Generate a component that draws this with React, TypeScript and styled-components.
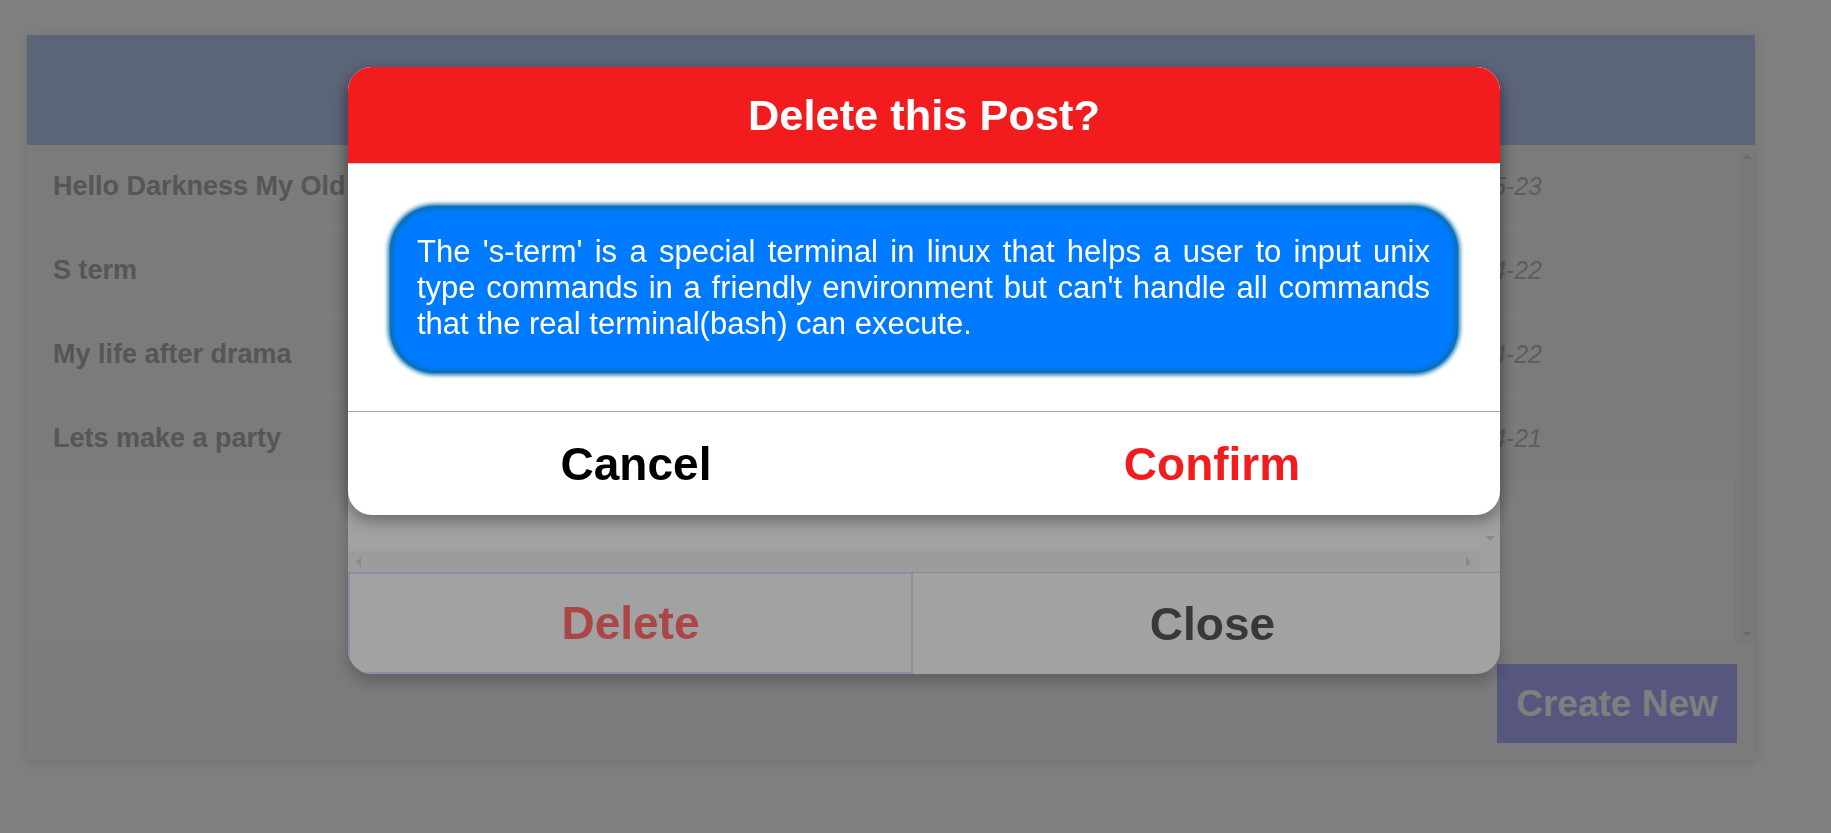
import React from "react";
import styled, { createGlobalStyle, css } from "styled-components";

const GlobalStyle = createGlobalStyle`
  html, body {
    margin: 0;
    padding: 0;
    background: #ffffff;
    font-family: "Liberation Sans", Arial, Helvetica, sans-serif;
  }
  body {
    width: 1831px;
    height: 833px;
    overflow: hidden;
  }
  * { box-sizing: border-box; }
`;

/* ---------- page behind the dialogs ---------- */

const Page = styled.main`
  height: 833px;
  padding: 35px 0 0 27px;
`;

const Card = styled.section`
  width: 1728px;
  height: 725px;
  background: #f6f6f6;
  box-shadow: 0 2px 12px rgba(0, 0, 0, 0.12);
  display: flex;
  flex-direction: column;
`;

const CardHeader = styled.header`
  flex: none;
  height: 110px;
  background: #b8c8f0;
`;

const ListArea = styled.div`
  flex: none;
  height: 500px;
  display: flex;
`;

const ListContent = styled.div`
  flex: 1;
  display: flex;
  flex-direction: column;
`;

const PostRow = styled.div`
  flex: none;
  height: 84px;
  border-bottom: 1px solid #fdfdfd;
  display: flex;
  align-items: center;
  justify-content: space-between;
  padding: 0 196px 0 26px;
`;

const PostTitle = styled.span`
  font-size: 27px;
  font-weight: 700;
  color: #acacac;
  white-space: nowrap;
`;

const PostDate = styled.span`
  font-size: 25px;
  font-style: italic;
  color: #bcbcbc;
`;

const EmptyPanel = styled.div`
  flex: 1;
  margin-right: 3px;
  background: #fafafa;
  border-right: 1px solid #ececec;
`;

const VScroll = styled.div<{ $bg: string; $w: number }>`
  flex: none;
  width: ${(p) => p.$w}px;
  background: ${(p) => p.$bg};
  display: flex;
  flex-direction: column;
  align-items: center;
  justify-content: space-between;
  padding: 9px 0 8px;
`;

const Arrow = styled.span<{ $dir: "up" | "down" | "left" | "right"; $color: string }>`
  display: block;
  width: 0;
  height: 0;
  ${(p) =>
    p.$dir === "up"
      ? css`
          border-left: 5px solid transparent;
          border-right: 5px solid transparent;
          border-bottom: 5px solid ${p.$color};
        `
      : p.$dir === "down"
      ? css`
          border-left: 5px solid transparent;
          border-right: 5px solid transparent;
          border-top: 5px solid ${p.$color};
        `
      : p.$dir === "left"
      ? css`
          border-top: 5px solid transparent;
          border-bottom: 5px solid transparent;
          border-right: 5px solid ${p.$color};
        `
      : css`
          border-top: 5px solid transparent;
          border-bottom: 5px solid transparent;
          border-left: 5px solid ${p.$color};
        `}
`;

const Spacer = styled.span`
  display: block;
`;

const CardFooter = styled.footer`
  flex: 1;
  display: flex;
  justify-content: flex-end;
  align-items: flex-start;
  padding: 18px 18px 0 0;
  border-top: 1px solid #fcfcfc;
`;

const CreateButton = styled.button`
  width: 240px;
  height: 79px;
  border: none;
  background: #aeacfe;
  color: #ffffff;
  font-family: inherit;
  font-size: 37px;
  font-weight: 700;
  padding: 0;
`;

/* ---------- overlay & dialogs ---------- */

const Overlay = styled.div`
  position: fixed;
  inset: 0;
  background: rgba(0, 0, 0, 0.5);
`;

const BackModal = styled.div`
  position: fixed;
  left: 348px;
  top: 67px;
  width: 1152px;
  height: 607px;
  background: #a2a2a2;
  border-radius: 24px;
  overflow: hidden;
  display: flex;
  flex-direction: column;
  box-shadow: 0 8px 16px rgba(0, 0, 0, 0.22);
`;

const BackBody = styled.div`
  flex: 1;
  display: flex;
`;

const BackText = styled.div`
  flex: 1;
`;

const BackVScroll = styled.div`
  flex: none;
  width: 21px;
  background: #a0a0a0;
  display: flex;
  flex-direction: column;
  justify-content: flex-end;
  align-items: center;
  padding-bottom: 10px;
`;

const HScroll = styled.div`
  flex: none;
  height: 21px;
  display: flex;
`;

const HTrack = styled.div`
  flex: 1;
  background: #9c9c9c;
  display: flex;
  align-items: center;
  justify-content: space-between;
  padding: 0 8px 0 8px;
`;

const ScrollCorner = styled.div`
  flex: none;
  width: 21px;
  background: #a0a0a0;
`;

const BackActions = styled.div`
  flex: none;
  height: 102px;
  display: flex;
`;

const BackButton = styled.button<{ $variant: "delete" | "close" }>`
  font-family: inherit;
  font-size: 46px;
  font-weight: 700;
  background: transparent;
  padding: 0;
  ${(p) =>
    p.$variant === "delete"
      ? css`
          flex: none;
          width: 565px;
          color: #aa4646;
          border: 2px solid #8890a6;
        `
      : css`
          flex: 1;
          color: #383838;
          border: none;
          border-top: 1px solid #8e8e8e;
          padding-left: 12px;
        `}
`;

const FrontModal = styled.div`
  position: fixed;
  left: 348px;
  top: 67px;
  width: 1152px;
  background: #ffffff;
  border-radius: 24px;
  overflow: hidden;
  box-shadow: 0 6px 16px rgba(0, 0, 0, 0.35);
`;

const ModalHeader = styled.h2`
  margin: 0;
  height: 97px;
  background: #f21c1f;
  border-bottom: 1px solid #d2d2d2;
  display: flex;
  align-items: center;
  justify-content: center;
  color: #ffffff;
  font-size: 43.4px;
  font-weight: 700;
`;

const ModalBody = styled.div`
  padding: 42px 42px 38px;
`;

const MessageBox = styled.p`
  margin: 0;
  background: #007bff;
  border-radius: 45px;
  padding: 28px 28px 31px 27px;
  color: #ffffff;
  font-size: 31px;
  line-height: 36px;
  text-align: justify;
  box-shadow: inset 0 0 4px 3px #0a6fae, 0 0 4px 2px #0a6fae;
`;

const ModalActions = styled.div`
  height: 104px;
  display: flex;
  border-top: 1px solid #a8a8a8;
`;

const ActionButton = styled.button<{ $tone: "neutral" | "danger" }>`
  flex: 1;
  border: none;
  background: transparent;
  padding: 0;
  font-family: inherit;
  font-size: 46px;
  font-weight: 700;
  color: ${(p) => (p.$tone === "danger" ? "#f21c1f" : "#000000")};
`;

const posts = [
  { title: "Hello Darkness My Old Friend", date: "2023-05-23" },
  { title: "S term", date: "2023-04-22" },
  { title: "My life after drama", date: "2023-04-22" },
  { title: "Lets make a party", date: "2023-04-21" },
];

export default function App() {
  return (
    <>
      <GlobalStyle />
      <Page>
        <Card>
          <CardHeader />
          <ListArea>
            <ListContent>
              {posts.map((p) => (
                <PostRow key={p.title}>
                  <PostTitle>{p.title}</PostTitle>
                  <PostDate>{p.date}</PostDate>
                </PostRow>
              ))}
              <EmptyPanel />
            </ListContent>
            <VScroll $bg="#f3f3f3" $w={17}>
              <Arrow $dir="up" $color="#d6d6d6" />
              <Arrow $dir="down" $color="#d6d6d6" />
            </VScroll>
          </ListArea>
          <CardFooter>
            <CreateButton>Create New</CreateButton>
          </CardFooter>
        </Card>
      </Page>

      <Overlay />

      <BackModal>
        <BackBody>
          <BackText />
          <BackVScroll>
            <Arrow $dir="down" $color="#8a8a8a" />
          </BackVScroll>
        </BackBody>
        <HScroll>
          <HTrack>
            <Arrow $dir="left" $color="#8a8a8a" />
            <Spacer />
            <Arrow $dir="right" $color="#8a8a8a" />
          </HTrack>
          <ScrollCorner />
        </HScroll>
        <BackActions>
          <BackButton $variant="delete">Delete</BackButton>
          <BackButton $variant="close">Close</BackButton>
        </BackActions>
      </BackModal>

      <FrontModal>
        <ModalHeader>Delete this Post?</ModalHeader>
        <ModalBody>
          <MessageBox>
            The 's-term' is a special terminal in linux that helps a user to input unix type
            commands in a friendly environment but can't handle all commands that the real
            terminal(bash) can execute.
          </MessageBox>
        </ModalBody>
        <ModalActions>
          <ActionButton $tone="neutral">Cancel</ActionButton>
          <ActionButton $tone="danger">Confirm</ActionButton>
        </ModalActions>
      </FrontModal>
    </>
  );
}
